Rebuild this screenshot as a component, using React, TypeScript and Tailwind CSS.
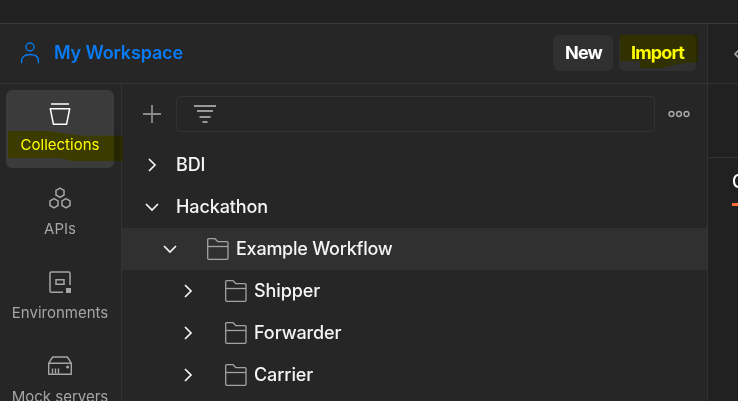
import type { ReactNode } from "react";

function UserIcon() {
  return (
    <svg width="20" height="22" viewBox="0 0 20 22" fill="none" stroke="#097bed" strokeWidth="1.4">
      <circle cx="10" cy="5" r="4" />
      <path d="M1.6 21.3v-2.6c0-3.6 3-6.2 8.4-6.2s8.4 2.6 8.4 6.2v2.6" />
    </svg>
  );
}

function CollectionIcon() {
  return (
    <svg width="24" height="24" viewBox="0 0 24 24" fill="none" stroke="#fff" strokeWidth="1.5">
      <path d="M3 2h18" />
      <path d="M2.3 6.7h19.4l-3.1 15.5H5.4z" strokeLinejoin="round" />
    </svg>
  );
}

function ApiIcon() {
  const hex = "M0-4.6l4 2.3v4.6l-4 2.3l-4-2.3v-4.6z";
  return (
    <svg width="24" height="24" viewBox="0 0 24 24" fill="none" stroke="#a6a6a6" strokeWidth="1.5">
      <path d={hex} transform="translate(12 6.7)" />
      <path d={hex} transform="translate(6 17.2)" />
      <path d={hex} transform="translate(18 17.2)" />
    </svg>
  );
}

function EnvironmentIcon() {
  return (
    <svg width="24" height="24" viewBox="0 0 24 24" fill="none" stroke="#a6a6a6" strokeWidth="1.5">
      <path d="M15 22.3H3.2a1.2 1.2 0 0 1-1.2-1.2V3.2A1.2 1.2 0 0 1 3.2 2h17.6A1.2 1.2 0 0 1 22 3.2V15" />
      <path d="M8 9.8h8v4.5H8z" />
      <path d="M18 18h5v5h-5z" fill="#a6a6a6" stroke="none" />
    </svg>
  );
}

function ServerIcon() {
  return (
    <svg width="24" height="24" viewBox="0 0 24 24" fill="none" stroke="#a6a6a6" strokeWidth="1.4">
      <path d="M.7 9.2h22.6v11.1H.7zM.7 9.2l4-6.2h14.6l4 6.2" strokeLinejoin="round" />
      <path d="M4.5 14.5v5M7.5 14.5v5M10.5 14.5v5" />
      <circle cx="19.6" cy="13.1" r="1.5" fill="#a6a6a6" stroke="none" />
    </svg>
  );
}

function FolderIcon() {
  return (
    <svg width="22" height="22" viewBox="0 0 22 22" fill="none" stroke="#a3a3a3" strokeWidth="1.3" strokeLinejoin="round">
      <path d="M1.5.7h6.5l3 3h9a1 1 0 0 1 1 1v15.6a1 1 0 0 1-1 1H1.7a1 1 0 0 1-1-1V1.5a.8.8 0 0 1 .8-.8z" />
      <path d="M.7 8.5H21" />
    </svg>
  );
}

function Chevron({ open }: { open?: boolean }) {
  return (
    <svg width="16" height="16" viewBox="0 0 16 16" fill="none" stroke="#f5f5f5" strokeWidth="1.7">
      <path d={open ? "M2 5l6 6 6-6" : "M5 2l6 6-6 6"} />
    </svg>
  );
}

function NavItem({ icon, label, active }: { icon: ReactNode; label: string; active?: boolean }) {
  return (
    <div
      className={`flex h-[78px] w-[108px] shrink-0 flex-col items-center rounded-md pt-3 text-[15px] leading-5 whitespace-nowrap ${
        active ? "bg-[#3b3b3b] text-white" : "text-[#a6a6a6]"
      }`}
    >
      {icon}
      <span className="mt-[9px]">{label}</span>
    </div>
  );
}

function TreeRow({ label, indent, open, folder, active }: { label: string; indent: string; open?: boolean; folder?: boolean; active?: boolean }) {
  return (
    <div className={`flex h-[42px] shrink-0 items-center ${indent} ${active ? "bg-[#303030]" : ""}`}>
      <Chevron open={open} />
      {folder ? (
        <div className="mr-[7px] ml-[29px]">
          <FolderIcon />
        </div>
      ) : (
        <div className="w-4" />
      )}
      <span className={active ? "tracking-[-0.24px]" : "tracking-[-0.1px]"}>{label}</span>
    </div>
  );
}

export default function App() {
  return (
    <div className="relative flex h-[401px] w-[738px] flex-col overflow-hidden bg-[#262626] font-['Inter',sans-serif] text-lg font-medium text-[#f5f5f5]">
      <div className="h-6 shrink-0 border-b border-[#3b3b3b] bg-[#212121]" />
      <header className="flex h-[60px] shrink-0 border-b border-[#333333]">
        <div className="flex w-[708px] shrink-0 items-center border-r border-[#333333] pr-[11px] pb-px pl-5 font-semibold">
          <UserIcon />
          <span className="ml-[14px] tracking-[-0.15px] text-[#097bf5]">My Workspace</span>
          <div className="ml-auto flex gap-1.5 text-white">
            <button className="h-9 w-[60px] rounded-md bg-[#303030] pl-px font-bold tracking-[-0.9px]">New</button>
            <button className="h-9 w-[77px] rounded-md bg-[#303030] font-bold tracking-[-0.85px]">Import</button>
          </div>
        </div>
        <div className="flex flex-1 items-center overflow-hidden bg-[#212121] pl-[25px]">
          <svg className="shrink-0" width="8" height="12" viewBox="0 0 8 12" fill="none" stroke="#a6a6a6" strokeWidth="1.6">
            <path d="M6 2L2 6l4 4" />
          </svg>
        </div>
      </header>
      <div className="flex min-h-0 flex-1">
        <nav className="flex w-[122px] shrink-0 flex-col gap-1.5 border-r border-[#333333] pt-1.5 pl-1.5 font-normal">
          <NavItem icon={<CollectionIcon />} label="Collections" active />
          <NavItem icon={<ApiIcon />} label="APIs" />
          <NavItem icon={<EnvironmentIcon />} label="Environments" />
          <NavItem icon={<ServerIcon />} label="Mock servers" />
        </nav>
        <main className="flex w-[586px] shrink-0 flex-col border-r border-[#333333]">
          <div className="flex h-[60px] shrink-0 items-center pl-5">
            <svg width="20" height="20" viewBox="0 0 20 20" stroke="#8b8b8b" strokeWidth="1.8">
              <path d="M1 10h18M10 1v18" />
            </svg>
            <div className="ml-[14px] flex h-9 w-[479px] items-center rounded border border-[#333333] pl-4">
              <svg width="24" height="20" viewBox="0 0 24 20" stroke="#999999" strokeWidth="1.8">
                <path d="M1 2h22M4 7h16M6.5 13h11M9.5 18h5" />
              </svg>
            </div>
            <svg className="ml-3" width="24" height="8" viewBox="0 0 24 8" fill="none" stroke="#a6a6a6" strokeWidth="1.5">
              <circle cx="4.5" cy="4" r="2.4" />
              <circle cx="12" cy="4" r="2.4" />
              <circle cx="19.5" cy="4" r="2.4" />
            </svg>
          </div>
          <TreeRow label="BDI" indent="pl-[22px]" />
          <TreeRow label="Hackathon" indent="pl-[22px]" open />
          <TreeRow label="Example Workflow" indent="pl-10" open folder active />
          <TreeRow label="Shipper" indent="pl-[58px]" folder />
          <TreeRow label="Forwarder" indent="pl-[58px]" folder />
          <TreeRow label="Carrier" indent="pl-[58px]" folder />
        </main>
        <aside className="flex w-[30px] flex-col overflow-hidden bg-[#212121]">
          <div className="h-[74px] shrink-0 border-b border-[#333333]" />
          <div className="ml-6 flex h-12 w-24 shrink-0 items-center border-b-3 border-[#ff6c37] text-white">
            <span className="pt-0.5">O</span>
          </div>
        </aside>
      </div>
      <svg className="pointer-events-none absolute inset-0 mix-blend-multiply" width="738" height="401" fill="#ffff00">
        <path d="M8 131h40l28 4 6 .7h41V161H72l-12-3H8z" />
        <path d="M620 35h78v27l-20 2-18 4h-20v-7h-20z" />
      </svg>
    </div>
  );
}
